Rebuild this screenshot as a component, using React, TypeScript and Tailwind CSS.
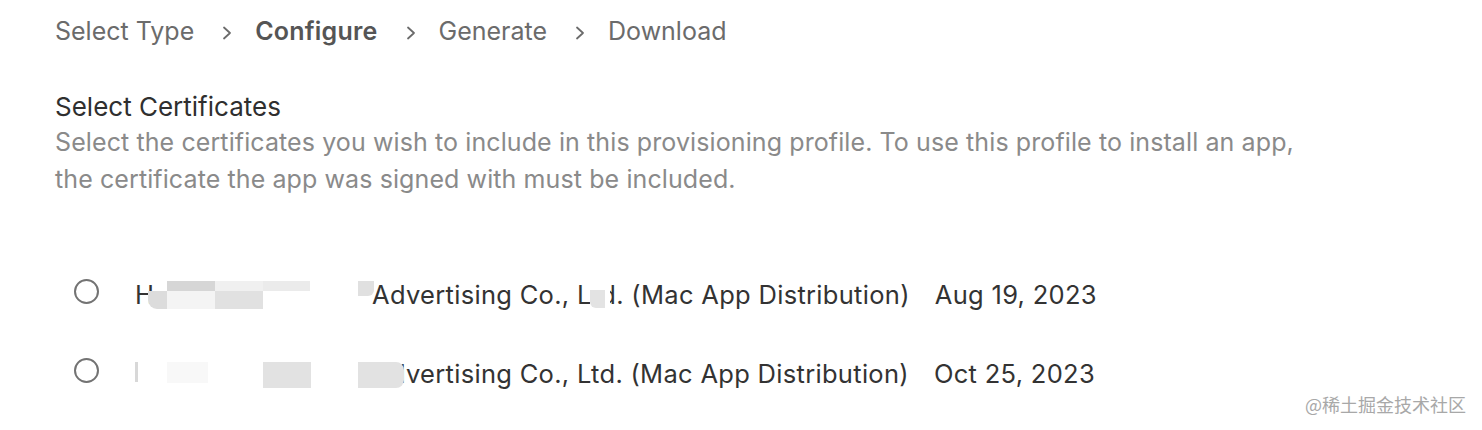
import React from 'react';

const steps = [
  { label: 'Select Type', active: false },
  { label: 'Configure', active: true },
  { label: 'Generate', active: false },
  { label: 'Download', active: false },
];

const Chevron = () => (
  <svg width="10" height="14" viewBox="0 0 10 14" className="text-[#6b6b6b] translate-y-[1px]">
    <path d="M2 1.5 L8 7 L2 12.5" fill="none" stroke="currentColor" strokeWidth="1.8" strokeLinecap="round" strokeLinejoin="round" />
  </svg>
);

const Radio = () => (
  <span className="w-[25px] h-[25px] rounded-full border-2 border-[#737373] bg-white shrink-0" />
);

const App: React.FC = () => {
  return (
    <div
      className="relative w-[1482px] h-[430px] bg-white overflow-hidden"
      style={{ fontFamily: 'Inter, "Noto Sans", sans-serif' }}
    >
      <div className="pl-[55px] pt-[15px]">
        {/* Breadcrumb */}
        <div className="flex items-center h-[34px] text-[25px] text-[#6b6b6b]">
          {steps.map((s, i) => (
            <React.Fragment key={s.label}>
              {i > 0 && (
                <span className="ml-[28px] mr-[23px] flex items-center">
                  <Chevron />
                </span>
              )}
              <span className={s.active ? 'font-semibold text-[#555] tracking-[0.2px]' : ''}>{s.label}</span>
            </React.Fragment>
          ))}
        </div>

        {/* Section */}
        <div className="mt-[41px]">
          <h2 className="text-[26px] leading-[34px] text-[#2f2f2f]">Select Certificates</h2>
          <p className="text-[25px] leading-[37px] text-[#8a8a8a] tracking-[0.1px] w-[1300px]">
            Select the certificates you wish to include in this provisioning profile. To use this profile to install an app,
            <br />
            the certificate the app was signed with must be included.
          </p>
        </div>

        {/* Certificate list */}
        <div className="mt-[76px] pl-[19px] flex flex-col gap-[45px] text-[25.5px] text-[#333] tracking-[0.3px]">
          <div className="flex items-center h-[34px]">
            <Radio />
            <div className="ml-[36px] flex items-center translate-y-[4px]">
              <span className="relative inline-block w-[237px] h-[30px] leading-[30px]">
                <span>H</span>
                <span className="absolute left-[13px] top-[11px] w-[20px] h-[18px] rounded-bl-[9px] bg-[#dcdcdc]" />
                <span className="absolute left-[32px] top-[1px] w-[48px] h-[10px] bg-[#d6d6d6]" />
                <span className="absolute left-[32px] top-[11px] w-[48px] h-[18px] bg-[#f4f4f4]" />
                <span className="absolute left-[80px] top-[1px] w-[48px] h-[10px] bg-[#f0f0f0]" />
                <span className="absolute left-[80px] top-[11px] w-[48px] h-[18px] bg-[#e1e1e1]" />
                <span className="absolute left-[128px] top-[1px] w-[47px] h-[10px] bg-[#ebebeb]" />
                <span className="absolute left-[223px] top-[1px] w-[16px] h-[15px] rounded-br-[6px] bg-[#e0e0e0]" />
              </span>
              <span>Advertising Co., L</span>
              <span className="relative">
                t
                <span className="absolute left-[-2px] -top-[2px] w-[20px] h-[34px] bg-white" />
                <span className="absolute left-[-2px] top-[14px] w-[15px] h-[18px] rounded-bl-[6px] bg-[#e3e3e3]" />
              </span>
              <span>d. (Mac App Distribution)</span>
              <span className="ml-[25px]">Aug 19, 2023</span>
            </div>
          </div>
          <div className="flex items-center h-[34px]">
            <Radio />
            <div className="ml-[36px] flex items-center translate-y-[4px]">
              <span className="relative inline-block w-[237px] h-[30px]">
                <span className="absolute left-[0px] top-[3px] w-[3px] h-[20px] bg-[#d8d8d8]" />
                <span className="absolute left-[32px] top-[3px] w-[41px] h-[21px] bg-[#f8f8f8]" />
                <span className="absolute left-[128px] top-[3px] w-[48px] h-[26px] bg-[#e2e2e2]" />
                <span className="absolute left-[223px] top-[3px] w-[46px] h-[26px] rounded-r-[8px] bg-[#e2e2e2]" />
              </span>
              <span>Advertising Co., Ltd. (Mac App Distribution)</span>
              <span className="ml-[25px]">Oct 25, 2023</span>
            </div>
          </div>
        </div>
      </div>

      {/* Watermark */}
      <div
        className="absolute right-[16px] bottom-[12px] text-[18px] text-[#a8a8a8]"
        style={{ fontFamily: '"Noto Sans CJK SC", sans-serif' }}
      >
        @稀土掘金技术社区
      </div>
    </div>
  );
};

export default App;
